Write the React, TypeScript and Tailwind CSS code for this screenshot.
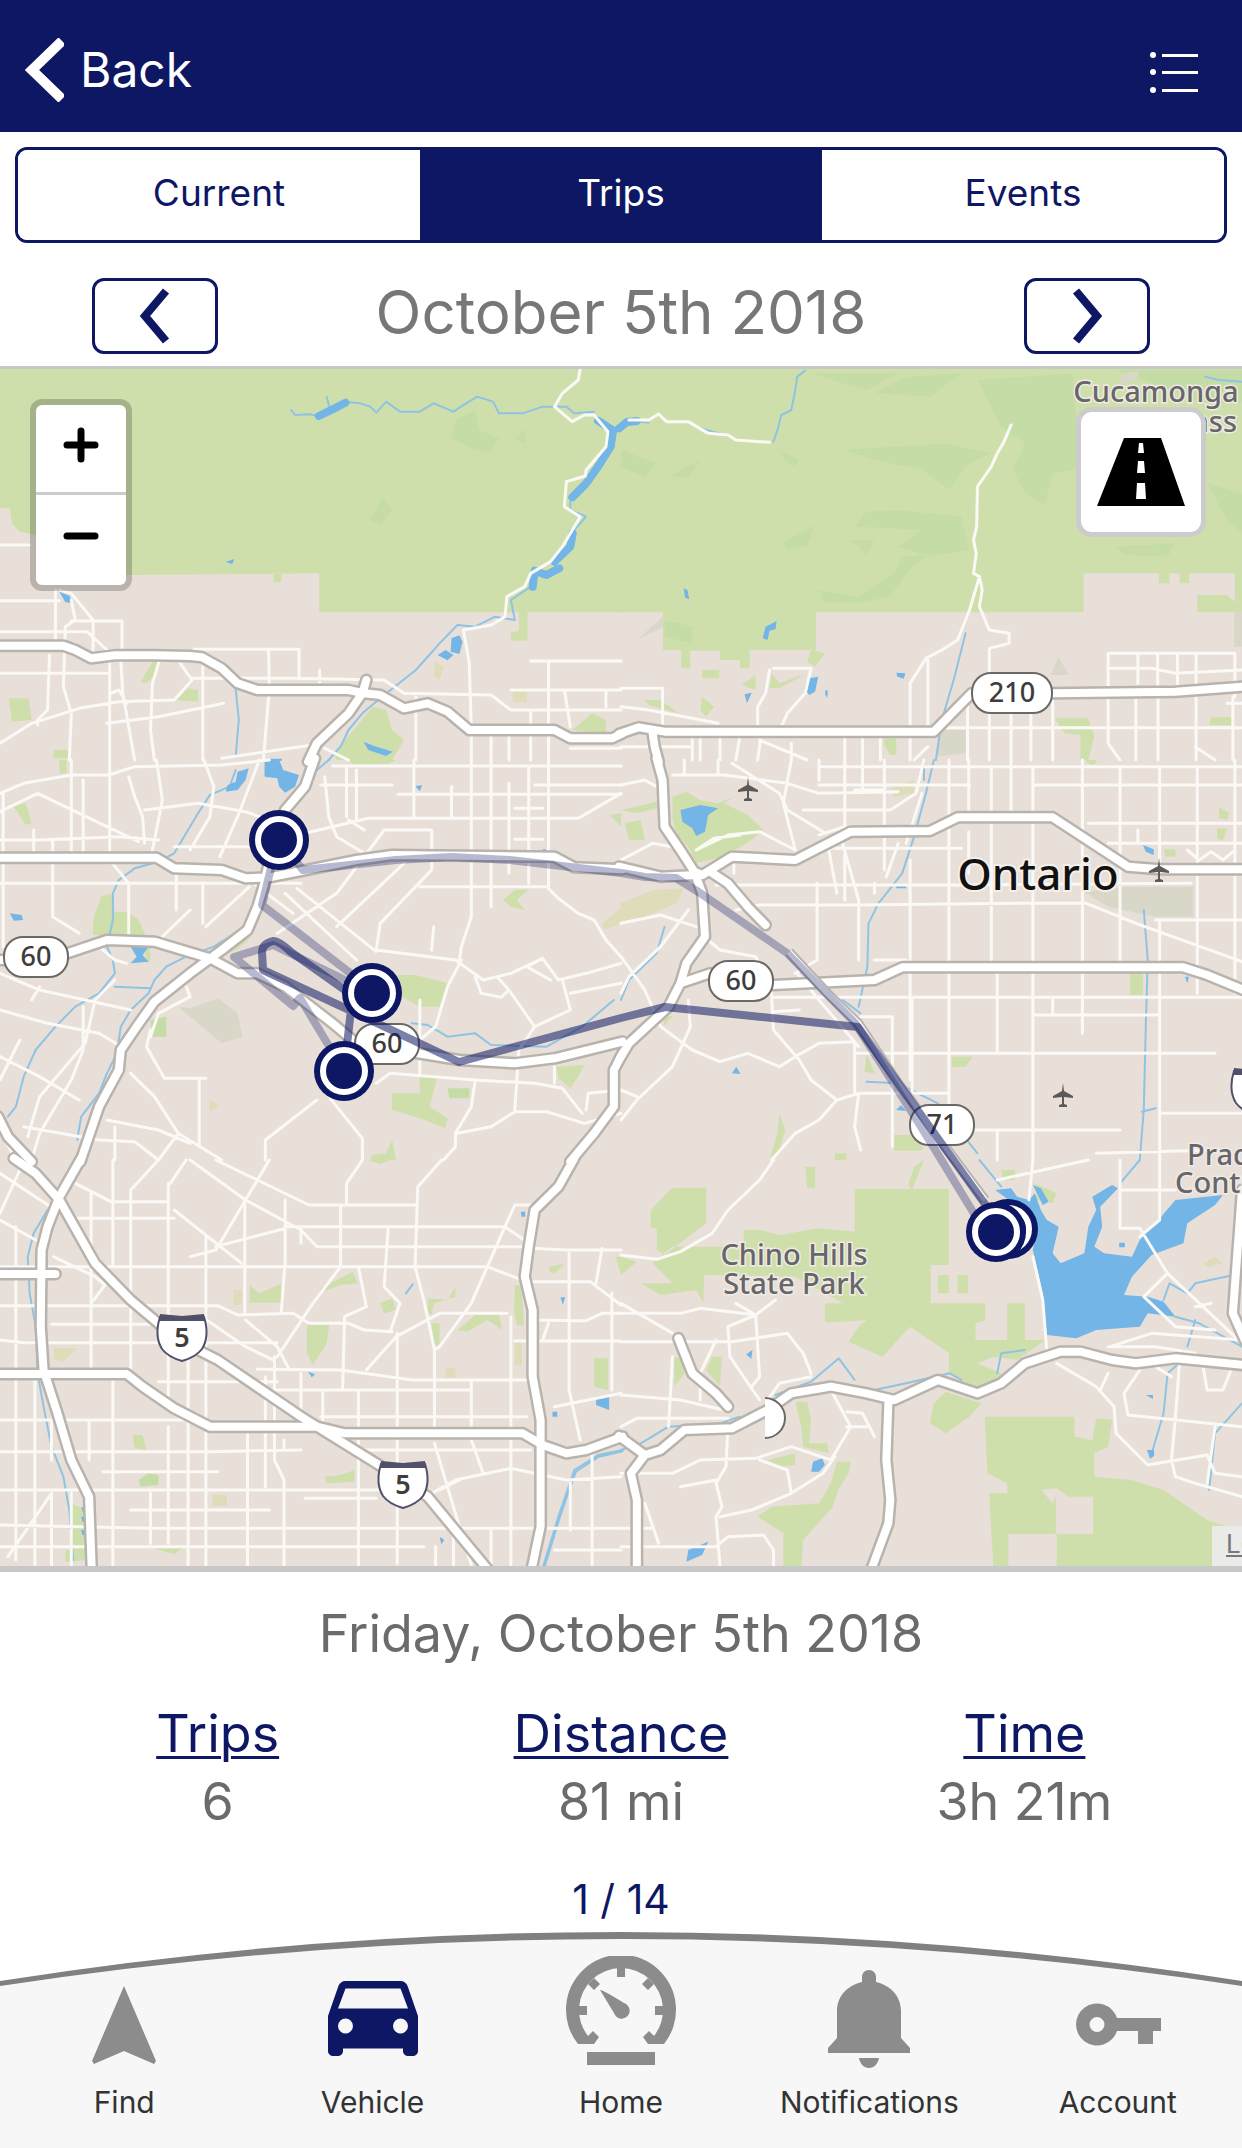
import { useState } from 'react'
import type { ReactNode } from 'react'
import clsx from 'clsx'

interface Tile {
  col: number
  row: number
  parks: string
  hills?: string
  pale?: string
  grey?: string
  lakes: string
  rivers?: string
  streams: string
  streets: string
  freeways: string
}

// Tile units are 1568 x 1200, each tile covers 621 x 400 of the map canvas
const tiles: Tile[] = [
  {
    col: 0,
    row: 0,
    parks:
      'M0 27H1570V757H806V640L330 645H90V525L50 515 30 490 25 445H0ZM1310 757H1332V842H1290V818L1310 812ZM355 965L385 905 400 905 395 940 370 970ZM445 1020L475 985 500 990V1025ZM22 1015H72L80 1080 30 1085ZM135 1170H175V1195H135ZM840 1180L900 1100 940 1040 975 1050 990 1110 1020 1140 990 1200H850ZM1445 1110L1495 1060 1530 1080V1120ZM690 640H710V667H690Z',
    hills: 'M1150 180L1200 150 1210 210 1260 235 1235 280 1190 265 1140 235ZM1300 235L1330 205 1325 250ZM965 410L990 450 960 495 935 480Z',
    pale: 'M1295 985H1330V1025H1295ZM1100 905L1120 920 1110 960 1095 945Z',
    lakes:
      'M1140 835L1160 826 1168 845 1160 882 1138 875ZM1105 885L1125 870 1145 885 1130 901ZM150 695L175 707 184 729 165 727ZM570 605L592 597 586 613ZM918 1145L945 1158 992 1175 975 1188 930 1170ZM680 1196H712V1202H680Z',
    rivers: 'M1510 182L1548 212 1542 260 1510 320 1480 370 1445 412M1446 520L1440 560 1400 605M1412 625L1380 645 1350 632 1345 680M805 168L850 142 872 128',
    streams:
      'M735 150L745 165 780 163 815 170M825 110L832 145M875 126L910 130 935 140 950 158 975 125 1010 155 1060 155 1095 130 1145 155 1180 128 1205 110 1245 125 1260 160 1320 160 1370 140 1430 140 1450 160 1500 155M1440 425L1440 450 1480 470 1450 510M1340 680L1290 720 1300 780 1250 770 1200 800 1155 795 1110 850 1050 930 970 1005 915 1060 880 1110 860 1160 830 1200M595 985L603 1080 595 1190M1548 212L1568 200',
    streets:
      'M1465 27L1460 60 1420 100 1400 140 1445 185 1475 165 1500 165 1535 215 1530 260 1480 330 1478 348 1430 365 1425 440 1465 470 1450 500 1420 560 1390 605 1340 640 1325 680 1280 710 1275 770 1240 795 1170 810 1185 910 1190 1110V1200M0 555H75M0 722H150M140 690V850M150 690L180 700 235 780M180 720L190 780 165 800 160 980 180 1060 175 1200M180 783H308V900M0 815H220L270 870M235 790V870M0 940H275M125 885L120 1050 95 1080V1095M0 1150L80 1090 200 1045 300 1025 440 1020 485 960 455 910M277 900V1200M305 900L310 1000 340 1200M405 890L385 970 380 1110 390 1200M512 900V1200M490 868H755V950M678 868L680 985 665 1200M485 955H740L970 960 1020 1000 1240 1005 1290 1050H1568M270 1090L400 1070 565 1030M560 1195L700 1170 790 1155M807 930V1000M1050 1010V1200M1385 905V1110M1340 903H1568M1290 990H1568M1425 990L1440 1100M1530 990V1040M1240 1120V1200M1340 1050V1200M1285 1120V1200M1440 1165H1568M1385 1110V1200M820 1165L880 1200M280 1000L300 990 320 1030',
    freeways:
      'M-5 857H160L190 870 230 895 290 886H390L480 888 510 892 560 925 600 970 650 990H880L920 1000 960 1005 1020 1045 1080 1030 1130 1055 1185 1110H1400L1440 1135H1545L1572 1120M925 960L915 1000 880 1060 800 1150 778 1205',
  },
  {
    col: 1,
    row: 0,
    parks:
      'M-2 27H1570V757H1455V705H1530L1550 725V640H1435V670H1410V640H1385V670H1358V640H1168V757H492V870H325V925H300V900H250V872H175V925H152V870H106V757H-2ZM205 930H248V955H205ZM205 1010L235 1040 215 1070 200 1050ZM60 1020L100 1020 145 1060 70 1035ZM480 868L515 880 490 920 470 905ZM305 975L340 945V990ZM380 940L400 970 470 940 400 985 375 985ZM1095 1075H1180L1195 1130 1180 1200H1160V1125L1120 1120ZM1490 1072H1540L1545 1095H1485ZM665 1135H695V1185H680L665 1155Z',
    hills:
      'M480 40L700 40 620 90 560 70ZM900 60L1140 40 1150 170 1150 330 1090 340 1070 435 1020 400 990 330 1020 250 960 200ZM640 100L720 50 860 40 780 110ZM560 270L820 250 930 280 870 320 830 390 760 330 640 300ZM590 500L620 455 700 450 860 470 880 570 780 590 700 560 760 510ZM500 690L600 710 690 640 710 590 780 580 720 640 680 710 590 730 510 725ZM0 270L90 310 60 350 0 320ZM1480 370L1568 400V520L1530 480ZM110 780L180 800V850L110 830ZM1250 30H1568V130H1480ZM580 540L640 540 620 585ZM1250 560L1400 550 1380 590 1270 585ZM120 350L200 300 170 350ZM410 545L490 495 470 560 420 570ZM400 270L450 300 440 320 415 300Z',
    grey: 'M800 1110H870V1180L800 1190ZM1085 945L1105 890 1130 945ZM1548 757H1568V860H1548ZM40 840L106 770V800ZM1255 60L1280 35 1310 35 1300 60 1265 72Z',
    lakes:
      'M158 685L168 690 172 718 162 713ZM365 800L393 783 390 808 375 812 370 840 358 835ZM475 955L498 950 490 995 475 1005 463 985ZM312 1003L330 998 318 1030ZM695 938L718 940 714 956 698 950ZM516 990L522 992 521 1014 516 1005Z',
    rivers: 'M-5 205L15 186 40 183',
    streams: 'M465 32L445 50 440 90 430 150 405 165 395 210 385 245M30 182L70 188M200 205L270 228M870 820L840 960 810 1080 795 1200M1475 50L1510 60 1568 65',
    streets:
      'M20 180H70L95 162 115 185 170 185 220 220 270 225 290 240 375 247M985 195L965 250 950 280 935 320 900 380 898 500 890 540 897 580 890 640 905 650 880 750 850 840 810 870 770 895 730 970V1200M905 650L912 690 905 740 930 810 980 820 980 850 930 865V950M0 985H105V1095M0 1040L70 1050 245 1090M385 925H480L465 1000 420 1060 405 1100M375 930L365 1000 345 1040V1110M0 1160H180M180 1130V1200M200 1130V1200M250 1130V1200M300 1130L290 1200M350 1140L470 1200M345 1200L352 1140M430 1150V1200M565 1120V1200M610 1120V1200M655 1120V1200M775 900V1110M800 1103H1568M775 1160L740 1200M875 1030V1200M930 1060V1200M985 1060V1200M1035 1060V1200M1090 1010V1200M1232 880H1550V1010M1305 880V970M1355 880V990M1405 880V980M1452 880V1200M1230 880V1150L1260 1200M1235 925H1340L1400 940 1568 930M1300 1000V1200M1356 1000V1200M1450 1160L1500 1200M1545 1010V1200M1530 1030H1568',
    freeways: 'M-5 1122L45 1102 110 1115H790L885 1000H1090L1400 995 1572 980M80 1120L85 1160 95 1205',
  },
  {
    col: 0,
    row: 1,
    parks:
      'M235 525V480L255 410 280 400 290 455H320L350 480 370 530ZM35 140L65 130 80 190 65 195ZM150 0H168V40H150ZM880 0H1000L980 12H890ZM1005 645H1050L1130 670 1110 740 1060 740 1015 710ZM1060 945H1105L1085 1040 1130 1075 1125 1105 1060 1075 1020 1060 990 1050V1000H1060ZM1270 420L1300 390 1335 388 1305 420 1325 450 1290 440ZM1405 920L1475 915 1460 950 1440 985 1410 955ZM935 1200L940 1185 975 1180 990 1140 1000 1200ZM1540 165L1568 160V200ZM560 575L635 530 600 568 562 588ZM360 545H378L380 600 372 612Z',
    hills: 'M380 780L420 770V830H385ZM1130 985H1185V1015H1135Z',
    pale: 'M1520 490L1568 445V490L1525 510ZM530 1020L555 1035 530 1055Z',
    grey: 'M450 740L480 745 550 715 600 760 612 830 560 850 510 800Z',
    lakes:
      'M668 0H705L715 30 755 45 745 80 720 98 705 80 700 55 668 50ZM600 35L628 25 620 60 600 90 570 95 575 75 595 65ZM330 560H375L360 585 375 605 330 610 345 590ZM25 460L55 465 58 480 35 482ZM1048 78L1066 76 1060 93ZM1370 268H1379V285H1370Z',
    streams:
      'M595 30L580 80 530 105 500 160 470 220 440 280 400 305 340 325 300 360 285 400 285 480 270 560 285 600 290 640 250 700 190 740 140 800 90 870 60 950 40 1040 20 1070M830 0L800 30M650 370L645 440 620 500 540 560 470 590 420 620 390 660 375 700 330 750 305 800 295 880 270 940 250 1000 205 1070 195 1140M290 680L380 685M1040 790L1080 795 1130 830 1200 820 1240 855 1380 860 1470 800 1550 720',
    streets:
      'M0 370H760M0 240H100L300 230 400 240M0 100L60 70 180 45 275 45 340 20 560 15 680 0M0 155L95 100 200 160 350 245M277 0V300L325 370V540M210 60V290M180 0V290M325 50L340 110 360 170 365 250M395 0L410 120 385 270M515 0L540 80 530 170 480 270M655 0L600 170 555 290M85 210V290M133 240V470L200 520M8 100V560M445 310V450M512 370V490M480 450L410 530M365 150L500 130 620 155 700 190M440 260H640M630 380L520 500M820 50L830 170 850 230 920 280M875 20V170M900 30V180M770 220L930 175H1460L1568 100M920 210L880 180M1045 0V175M1140 80V170M1190 0V470L1165 560 1160 600M810 75H990M1005 103H1568M840 18H1568M1240 0V440M1285 70V340M1335 20V370M1385 0V380M1300 145H1370M1300 238H1370M1568 75H1350M1060 380H1380L1410 415 1460 460 1500 480 1530 540 1568 590M1090 210V330L960 490 950 570 1150 600 1220 660 1290 640 1370 595 1410 660 1480 640 1568 610M1090 210H970L850 400 700 520M750 385L950 575M720 400L900 600M1020 310L850 500M640 370L740 460M1095 500L1090 570M1165 600L1130 680 1100 800 1060 840M1200 650L1215 700 1265 712 1285 690 1255 650M1285 690L1350 800 1310 870 1300 1050M1370 595L1330 620 1390 660M1420 660L1440 750 1350 800M1440 700L1568 670M985 940L1200 960 1350 970 1420 985 1470 1060M1480 1050L1485 1000 1568 990M985 940L950 970M800 1020L670 1140V1200M830 1010L915 1135V1200M1200 960L1190 1040 1150 1120V1160L1120 1200M1155 1120L1240 1100 1300 1055 1380 1055 1475 1090 1568 1060M1400 970V920M380 810L370 860 415 955H520M503 955V1160M330 940L390 1010 450 1120 560 1200M0 750L120 790 250 820 320 870M0 890L100 950 200 1020M50 840L0 960M290 660L240 720 215 850 100 1010 70 1130M210 740V870L180 960 100 1120 80 1200M0 640L100 690 330 750M80 720L100 680M470 680L480 710 400 760 380 830M290 1100V1200M60 1100L250 1140 340 1145 400 1200M270 1080L400 1110 480 1150M450 1120L400 1200M1060 720V945M250 560L290 600 320 610M0 1110L40 1200',
    freeways:
      'M-5 293H395L440 325 560 330 620 355 680 352 900 300 990 285 1400 290 1450 322 1572 328M795 -5L770 80 720 150 690 250 665 380 650 440 625 510 560 570 480 640 390 725 345 800 305 870 300 930 250 1040 203 1205M170 580L270 540 390 545 530 595 600 640 650 640 720 680 840 790 900 850 1160 900 1300 910 1400 895 1572 845M-5 600H20M1572 880L1550 930V1040L1500 1120 1440 1205M-5 1070L20 1130 80 1205',
  },
  {
    col: 1,
    row: 1,
    parks:
      'M130 110L165 95 200 120 245 130 290 108 260 130 320 165 360 210 330 240 260 290 190 310 170 260 140 220 130 180ZM0 150L90 125 105 140 40 160ZM1285 640H1318V705H1285ZM835 890H888L870 920 835 922ZM690 1125H730L765 1165 755 1172H690ZM400 1060L415 1110 400 1170 375 1200 395 1120ZM1510 140L1535 160 1530 180 1510 175ZM1505 205H1530L1520 243 1505 235ZM1370 268H1400V290H1375ZM620 880L640 940 615 935ZM1170 0H1200V10L1185 15ZM110 770L132 768 108 798ZM540 1180H570V1200H540ZM10 190L50 180 60 240 20 240Z',
    pale: 'M0 430L80 390 160 385 140 430 60 470 0 485ZM680 85L740 60V100L690 110Z',
    grey: 'M1170 395L1280 380H1445V470H1350L1230 440Z',
    lakes:
      'M150 150L200 135 245 145 220 165 212 215 190 228 180 205 155 185ZM280 940L291 920 302 942ZM695 1050L707 1035 720 1053ZM1318 255L1345 268V285L1325 275ZM1424 650H1434L1430 670ZM695 375H720V385H695Z',
    streams:
      'M790 0L770 100 740 230 710 340 650 430 625 490 622 620 600 740M765 0V60M110 500L90 580 20 660 0 720M1320 450L1330 600 1325 800 1320 1050 1310 1200M1315 1055L1350 1045M620 965L700 970 800 1030 900 1180M560 720L605 760',
    streets:
      'M130 45H260L420 70 500 100 700 95M0 75L60 60 90 80M160 0V45M245 0V45M280 10L400 100 420 150 510 215M430 0L410 130 440 270M500 0V60M565 0V200L500 225M610 0V90M665 0V330M590 90H660M765 0L745 100 680 150 460 150M500 20H1568M828 0V1130M878 0V170M878 215V340M935 20V620M985 0V160M500 75H880M1040 75H1568M500 265H860M520 240L545 400M1180 190H1568M1230 250H1568M240 375H850L1440 370M290 450L350 435H590L1000 430 1175 430 1300 490 1568 605M1350 480H1568M640 600H720M385 712H1568M1040 765H1360M590 880H1500M600 1000H828M890 1110H1260M1360 1060H1568M730 300V960M950 640V880M1040 20V1200M1165 0V820M1260 20V620M1360 20V310M1360 480V1200M1455 20V700M1550 0V700M1305 210V250M550 210L600 420V600M565 280V420M640 370V400M495 370V600L440 640M285 290V340M0 300L80 250 150 265M190 270L270 225 350 215 440 270M190 270L235 235 300 225M0 490L100 465 190 500M170 450L100 560 20 650 0 700M0 590L60 690 100 800 180 870 250 905 320 880 400 920 440 890 500 850 590 845M220 540L250 570 340 590 380 700 385 810 450 900 480 960 545 1020 500 1080 440 1120 380 1200M545 1020L600 1000 590 1100 605 1170M385 755L450 750M170 720L175 800 130 920 40 1020 0 1080M0 990L40 1010M590 850V1000M605 770H685V1160M700 250L670 350M720 250L760 100M445 640L500 720 600 860M950 1110V1200M1200 1180L1500 1170M735 720V1000M1090 720V765M1430 270L1460 300 1490 275 1520 300 1545 275',
    freeways:
      'M90 -5L105 60 110 200 150 270 185 335 205 400 212 530 165 610 150 670 120 740 20 850 -3 895M-5 320L100 350 190 345M185 335L205 345 280 290 440 300 580 215 780 213 850 172H1090L1280 320 1360 328H1572M225 335L270 370 320 440 365 495M150 670L225 640M385 675L640 660 710 622H1420L1480 645 1572 690',
  },
  {
    col: 0,
    row: 2,
    parks:
      'M630 375L655 400 710 372V428H630ZM810 385L890 335 905 370 860 375 815 395ZM775 490H832L825 550 790 615 775 580ZM960 430L990 415 1000 450 970 460ZM1080 415L1130 420 1150 380V410L1095 430 1090 465 1080 455ZM1090 490H1110V555H1095ZM1155 510L1200 465H1260L1268 510 1230 480 1180 515ZM1300 375H1318L1322 495H1305L1298 450ZM1385 320L1425 312 1400 340 1388 335ZM1500 595H1535V690L1500 680ZM335 825H360L370 870 340 865ZM820 950L860 945 895 930V965L825 970ZM180 1030L215 1050 220 1200 165 1205V1170H180ZM385 1165H460L440 1182ZM930 0H985L960 12ZM1555 290H1568V345Z',
    hills: 'M350 960L375 940 400 945V975L355 980Z',
    pale: 'M590 390H610V435H590ZM135 565H195L160 605 138 600ZM1300 545H1318V615H1300ZM1125 625H1150V652H1125ZM535 1005H573V1038H538Z',
    lakes:
      'M1505 710H1538V750L1505 735ZM778 635L796 643 787 652ZM1110 1130L1122 1140 1114 1153ZM1315 155H1326V170H1317ZM1415 412H1427L1421 434ZM1395 755H1407V770H1395ZM205 1040L215 1045 210 1060ZM205 1070H215V1085H208ZM205 1110H215V1125H208Z',
    streams:
      'M120 150L85 220 70 290 75 400 90 500 95 640 110 740 130 860 160 950 175 1050 185 1200M1042 373L1025 400M1572 870L1510 885 1450 930 1430 1000 1410 1070 1370 1225M1572 874L1512 890 1454 935 1434 1000 1414 1070 1374 1225',
    streets:
      'M40 200V1200M88 660V1215M130 780V900M130 1000V1215M180 1000V1215M230 100V640M225 780V900M285 0V320M285 650V1215M330 90V660M425 70V730M425 800V1150M520 230V1215M475 540V1215M618 120V460M625 790V1215M720 120V300L710 460M717 840V870M693 590V900L717 960V1215M860 140V320L790 430 700 590M905 690V1215M815 690V780M760 640V780M1003 520V800M1003 820V1210M1097 570V800M1097 850L1160 1100 1190 1215M1190 660V840L1220 940M1290 470V800M1290 830V1215M1437 280V690L1465 840M1520 265L1505 370M0 320H640L1230 320 1330 365H1490L1568 435M0 437H550L600 465 740 460 780 490 880 490 920 510 990 515M180 175H440M280 125H420M130 493H400M0 540L60 548H700M400 665H700M695 690H1190M650 628L860 630 1040 660H1330M0 780H470M810 770H1330M0 875H530L760 870M870 870H1340M0 990H960M330 1050H680M260 935H550M0 1095L380 1105H1568M0 1160H1070M770 1015H950M1090 1000L1150 960 1290 925 1430 960 1568 950M720 200H1270M800 260H1330M1340 265L1430 270H1568M1350 135H1300L1275 200 1330 245M1340 480L1480 482 1520 460 1568 460M1300 543H1568M1385 490L1370 540M1400 740L1568 700M1400 1170H1568M1495 880V1215M1440 960V1110M1545 400V690M780 135H1050M545 0L780 135M480 0L620 120 760 210 800 260M400 0L330 90M470 0L430 70M680 0L545 270 480 290M545 260L720 205M440 150L610 310M915 0L875 70V135M1115 0L1055 80 1048 320 1070 420 1097 570 1110 560 1190 430 1275 200M980 205L970 380 1010 430 985 515M905 320L925 440 870 470 865 690M925 630L1000 530 1110 460H1280M510 470L620 560 690 600M620 480L700 560 730 628M0 40L140 150M50 30L0 160M0 180L90 240M135 290L240 350 265 375 230 430M190 70L280 125M130 1000L20 1190M380 1000V1150M1100 1160V1215M1145 1100V1215M1240 1110V1215M670 650V980M1160 960L1110 990M760 205V250',
    freeways:
      'M205 -5L150 110 120 200 105 270 103 500 110 630 145 760 180 900 225 1010 232 1240M35 -5L90 40 150 120 240 310 330 420 450 540 550 600 760 770 950 910 1080 1010 1240 1240M-5 342H140M-5 642H320L360 680 440 745 530 800H800L870 820H1320L1370 855 1430 880 1480 870 1572 830M1450 -5L1410 80 1350 150 1335 260 1325 350 1345 450V650L1365 780 1365 1100 1340 1240',
  },
  {
    col: 1,
    row: 2,
    parks:
      'M590 87H828V315H782V430H920V480L895 490V540H975V430H1020V540H1072L1000 600 940 590 900 610 960 640 960 670 900 690 828 640V580L730 500 660 590 575 545 600 500 620 480 560 485 515 487V430H560L440 350 210 345 208 430 190 390 100 405 50 370 130 370 80 310 90 298 130 260H250L310 255V210H350L400 225 500 205 590 215ZM800 345H828V400H800ZM850 345H876V400H850ZM0 345L0 290 40 305ZM75 150L130 83H215V190L110 285 90 270V205H75ZM465 20H490V85H470ZM740 20L765 0 735 90 725 75ZM135 590V680L160 640 165 600ZM230 590L255 590 250 680 215 630ZM1045 70L1100 100 1090 130 1050 120ZM960 30H995V60H965ZM780 790L790 730 820 695 910 730 880 770 820 820ZM440 725H470L480 780 475 850 520 850 525 880 460 860 455 800ZM370 900L440 880V915L400 920ZM545 905L580 905 575 940 550 985 535 1040 460 1140 455 1218H410V1120L345 1070 380 1040 500 1030 530 970ZM918 770H1145V830L1190 840 1200 775 1240 780 1230 860 1195 880V950L1290 960 1370 990 1480 1080 1530 1100V1225H1100V1122H978V1225H940L930 1000 975 1000V970L925 940ZM1098 1010H1192V1122H1098ZM1060 990L1100 985 1130 1010H1098L1090 1030Z',
    pale: 'M1470 310L1500 290 1520 310 1480 322Z',
    lakes:
      'M945 90L985 85 1000 110 1030 120 1045 100 1060 150 1075 180 1105 200 1090 280 1110 310 1170 280 1180 200 1200 150 1190 110 1240 75 1255 85 1210 140 1215 200 1195 260 1220 280 1290 290 1310 240 1350 190 1400 120 1520 105 1500 135 1430 190 1420 250 1340 285 1290 350 1270 405 1330 410 1370 425 1400 470 1330 460 1310 500 1200 510 1150 535 1075 525 1065 400 1040 270 1050 200 990 130ZM1040 75L1060 85 1080 125 1065 135ZM485 905L508 895 515 915 500 935H480ZM170 1170L220 1145 205 1185 165 1205ZM316 583L332 570 329 597ZM1328 870H1346V888L1336 896ZM1325 705H1343V717ZM1258 248H1272V262H1258Z',
    streams:
      'M1310 0L1260 70M905 0L960 80M0 870L50 850 120 800 250 790 300 770M390 705L480 665 550 595 590 660M640 690L720 670 830 640 860 660M950 640L960 580 1020 570M1410 610L1380 640 1370 760 1340 880M1500 820L1485 990M1500 820L1568 730M1370 420L1385 370 1430 400 1450 370 1568 340M1400 470L1460 490 1568 560M1450 480L1430 560',
    streets:
      'M385 0L350 60 270 150 230 220 150 275 90 298 0 285M0 460H150L200 445 340 465 390 420M290 430L340 465 350 650 330 680M0 430L145 530M0 545H280L420 520 460 580 480 640M340 465L270 500 275 590 350 720M130 590L120 800M240 540L200 640V720M0 705L150 720 260 750M0 800L40 775H270M270 800L265 920 240 970 255 1040 240 1070 250 1218M0 940H130L200 900 340 895 430 860 530 900 580 800 530 690M350 900L420 930 430 1000 330 1050 250 1070M150 980L240 960M430 1000L510 940 540 890M0 1105H80M0 1160H240L270 1130 360 1125 385 1170V1218M60 1030L95 1150M570 755L610 760 640 830M570 800H620M1040 0L1030 120M1040 290L1065 420 1075 570M1260 0V205H1310L1380 340 1568 550M1360 0V180L1310 230M1260 90H1400M1380 340L1320 410 1400 500 1500 510M1450 440L1490 430M950 60L1180 0M1100 610L1200 680 1245 740 1250 820 1330 915 1480 885 1500 940 1568 950M1230 640L1210 690M1310 630L1270 700 1280 765 1568 800M1410 610L1400 770 1390 900 1400 950 1450 970 1568 1010M1235 560L1340 520 1568 540M1230 560L1350 560 1450 580M1470 620L1480 690 1520 690 1540 630M1500 800L1480 970M1350 620L1390 650M370 720L400 670 480 650',
    freeways:
      'M145 535L180 640 240 700 270 740M-5 828L60 885 100 870 160 810 280 805 370 750 430 700 530 680 620 700 690 720 800 660 900 700 960 670 1020 610 1110 575 1160 575 1240 600 1300 610 1400 595 1572 615M60 885L25 940 40 1020V1240M675 730L670 900 680 1020 675 1090 630 1235M1568 90L1545 460 1575 540',
  },
]

const layers: { key: keyof Tile; className: string }[] = [
  { key: 'parks', className: 'fill-[#cfdfac]' },
  { key: 'hills', className: 'fill-[#c5dca7]' },
  { key: 'pale', className: 'fill-[#dedcb9]' },
  { key: 'grey', className: 'fill-[#d8d7c8]' },
  { key: 'streams', className: 'fill-none stroke-[#8fc3e3] stroke-2' },
  { key: 'rivers', className: 'fill-none stroke-[#73b5e6] stroke-[8px]' },
  { key: 'lakes', className: 'fill-[#73b5e6]' },
  { key: 'streets', className: 'fill-none stroke-[#fbf9f6] stroke-3' },
  { key: 'freeways', className: 'fill-none stroke-[#b9b3ad] stroke-[13px]' },
  { key: 'freeways', className: 'fill-none stroke-white stroke-[8px]' },
]

const routeShields = [
  { label: '60', x: 36, y: 957, width: 64 },
  { label: '60', x: 387, y: 1044, width: 64 },
  { label: '60', x: 741, y: 981, width: 64 },
  { label: '71', x: 942, y: 1125, width: 64 },
  { label: '210', x: 1012, y: 693, width: 80 },
]

const interstateShields = [
  { label: '5', x: 182, y: 1338 },
  { label: '5', x: 403, y: 1485 },
  { label: '15', x: 1256, y: 1092 },
]

const airports = [
  { x: 748, y: 789 },
  { x: 1159, y: 870 },
  { x: 1063, y: 1095 },
]

const stops = [
  { x: 279, y: 840 },
  { x: 372, y: 993 },
  { x: 344, y: 1071 },
  { x: 1008, y: 1229 },
  { x: 996, y: 1232 },
]

const faintTrips = [
  'M279 840L271 868 262 905 372 990',
  'M281 842L303 870 341 866 396 860 451 857 510 860 570 867 621 873 645 877 676 878 700 893 787 953 855 1023 920 1125 984 1230',
  'M372 993L273 945 234 957 293 1006 300 998 344 1071',
]

const boldTrips = [
  'M344 1071L351 1010 349 993 291 952Q278 940 273 941 262 944 262 952L263 970 345 1008 459 1062 621 1018 665 1007 858 1027 1000 1225',
]

function RouteShield({ label, x, y, width }: { label: string; x: number; y: number; width: number }) {
  return (
    <g>
      <rect x={x - width / 2} y={y - 20} width={width} height="40" rx="19" className="fill-white stroke-[#6b6966] stroke-2" />
      <text x={x} y={y + 9} textAnchor="middle" className="fill-[#3d3d3d] text-[27px] font-medium">
        {label}
      </text>
    </g>
  )
}

function InterstateShield({ label, x, y }: { label: string; x: number; y: number }) {
  return (
    <g>
      <path
        d={`M${x - 22} ${y - 21}H${x + 22}Q${x + 28} ${y - 2} ${x + 20} ${y + 11}Q${x + 14} ${y + 19} ${x} ${y + 23}Q${x - 14} ${y + 19} ${x - 20} ${y + 11}Q${x - 28} ${y - 2} ${x - 22} ${y - 21}Z`}
        className="fill-white stroke-[#50506b] stroke-2"
      />
      <path d={`M${x - 22} ${y - 24}L${x} ${y - 22}L${x + 22} ${y - 24}L${x + 23} ${y - 17}H${x - 23}Z`} className="fill-[#50506b]" />
      <text x={x} y={y + 9} textAnchor="middle" className="fill-[#3d3d3d] text-[27px] font-semibold">
        {label}
      </text>
    </g>
  )
}

function TripMap() {
  return (
    <svg
      viewBox="0 369 1242 1197"
      preserveAspectRatio="xMidYMid slice"
      className="absolute inset-0 h-full w-full font-['Noto_Sans',sans-serif]"
      role="img"
      aria-label="Map of trips around Ontario"
    >
      {layers.map((layer, i) =>
        tiles.map((tile) => (
          <path
            key={`${i}-${tile.col}-${tile.row}`}
            d={tile[layer.key] as string | undefined}
            transform={`translate(${tile.col * 621} ${360 + tile.row * 400}) scale(${621 / 1568} ${400 / 1200})`}
            vectorEffect="non-scaling-stroke"
            fillRule="evenodd"
            strokeLinejoin="round"
            strokeLinecap="round"
            className={layer.className}
          />
        ))
      )}

      {/* CA-71 */}
      <path d="M789 952L827 993 858 1023 898 1083 938 1137 985 1200" className="fill-none stroke-[#b9b3ad] stroke-[10px]" />
      <path d="M789 952L827 993 858 1023 898 1083 938 1137 985 1200" className="fill-none stroke-white stroke-[6px]" />

      <path d="M765 1398A20 20 0 0 1 765 1438" className="fill-white stroke-[#6b6966] stroke-2" />
      {routeShields.map((s) => (
        <RouteShield key={`${s.label}-${s.x}`} {...s} />
      ))}
      {interstateShields.map((s) => (
        <InterstateShield key={s.x} {...s} />
      ))}
      {airports.map((a) => (
        <path
          key={a.x}
          transform={`translate(${a.x} ${a.y})`}
          d="M0 -12L1 -4 10 1V3L1 2V9L4 10V12H-4V10L-1 9V2L-10 3V1L-1 -4Z"
          className="fill-[#5c5a58]"
        />
      ))}

      <g className="fill-[#66666b] stroke-[#f1ebe4] stroke-3 text-[29px] font-medium [paint-order:stroke]">
        <text x="1156" y="402" textAnchor="middle">Cucamonga</text>
        <text x="1237" y="432" textAnchor="end">Pass</text>
        <text x="794" y="1265" textAnchor="middle">Chino Hills</text>
        <text x="794" y="1294" textAnchor="middle">State Park</text>
        <text x="1187" y="1165">Prado</text>
        <text x="1175" y="1193">Control</text>
      </g>
      <text x="1038" y="890" textAnchor="middle" className="fill-[#111] stroke-[#f4efe9] stroke-4 text-[44px] font-medium [paint-order:stroke]">
        Ontario
      </text>

      {faintTrips.map((d) => (
        <path key={d} d={d} strokeLinejoin="round" className="fill-none stroke-[#0d1763]/30 stroke-[8px]" />
      ))}
      {boldTrips.map((d) => (
        <path key={d} d={d} strokeLinejoin="round" className="fill-none stroke-[#0d1763]/55 stroke-[8px]" />
      ))}
      {stops.map((s) => (
        <g key={s.x} className="fill-[#0d1763]">
          <circle cx={s.x} cy={s.y} r="30" />
          <circle cx={s.x} cy={s.y} r="21" className="stroke-white stroke-[6px]" />
        </g>
      ))}
    </svg>
  )
}

const icons: Record<string, ReactNode> = {
  Find: <path d="M60 30L92 105 90 108 60 95 30 108 28 105Z" />,
  Vehicle: (
    <path
      fillRule="evenodd"
      d="M94.600 30.050C93.600 27.100 90.750 25 87.500 25H32.500C29.200 25 26.450 27.100 25.400 30.050L15 60V95C15 97.750 17.250 100 20 100H25C27.750 100 30 97.750 30 95V92.500H90V95C90 97.750 92.250 100 95 100H100C102.750 100 105 97.750 105 95V60ZM32.500 77.500A7.500 7.500 0 1 1 32.500 62.500 7.500 7.500 0 0 1 32.500 77.500ZM87.500 77.500A7.500 7.500 0 1 1 87.500 62.500 7.500 7.500 0 0 1 87.500 77.500ZM25 52.500L32.500 32.500H87.500L95 52.500Z"
    />
  ),
  Home: (
    <>
      <path d="M17 88A55 55 0 1 1 103 88H87L82 81 88 75 93 80A42 42 0 1 0 27 80L32 75 38 81 33 88Z" />
      <path d="M56 10H64V21H56ZM17 50H26V59H17ZM94 50H103V59H94ZM27 28L33 22 39 28 33 34ZM93 28L87 22 81 28 87 34Z" />
      <path d="M39 34Q42 34 63 47A8 8 0 1 1 53 57Z" />
      <path d="M26 96H94V109H26Z" />
    </>
  ),
  Notifications: (
    <path d="M60 14C64 14 67 17 67 21V26C83 30 92 41 92 55V82L101 92V97H19V92L28 82V55C28 41 37 30 53 26V21C53 17 56 14 60 14ZM50 102H70C69 108 65 112 60 112S51 108 50 102Z" />
  ),
  Account: (
    <path fillRule="evenodd" d="M59 62H103V75H95V88H80V75H59A21 21 0 1 1 59 62ZM39 61A7 7 0 1 0 39 76 7 7 0 0 0 39 61Z" />
  ),
}

const tabs = ['Find', 'Vehicle', 'Home', 'Notifications', 'Account']
const views = ['Current', 'Trips', 'Events']

const stats = [
  { label: 'Trips', value: '6' },
  { label: 'Distance', value: '81 mi' },
  { label: 'Time', value: '3h 21m' },
]

function DayButton({ label, d }: { label: string; d: string }) {
  return (
    <button
      type="button"
      aria-label={label}
      className="flex h-[76px] w-[126px] items-center justify-center rounded-xl border-3 border-[#0d1763] text-[#0d1763]"
    >
      <svg viewBox="0 0 36 56" className="h-14 w-9" fill="none" stroke="currentColor" strokeWidth="8">
        <path d={d} />
      </svg>
    </button>
  )
}

export default function App() {
  const [view, setView] = useState('Trips')
  const [tab, setTab] = useState('Vehicle')

  return (
    <div className="flex min-h-screen flex-col bg-white font-['Inter',sans-serif]">
      <header className="flex h-[132px] items-center justify-between bg-[#0d1763] px-6 pt-2 text-white">
        <button type="button" className="flex items-center gap-4 text-5xl">
          <svg viewBox="0 0 40 64" className="h-16 w-10" fill="none" stroke="currentColor" strokeWidth="10">
            <path d="M38 3L8 32 38 61" />
          </svg>
          Back
        </button>
        <button type="button" aria-label="Menu" className="mr-5 pt-1">
          <svg viewBox="0 0 48 42" className="h-[42px] w-12" fill="currentColor">
            <path d="M12 3H48V6H12ZM12 20H48V23H12ZM12 38H48V41H12Z" />
            <circle cx="3" cy="4" r="3" />
            <circle cx="3" cy="21" r="3" />
            <circle cx="3" cy="39" r="3" />
          </svg>
        </button>
      </header>

      <div className="mx-[15px] mt-[15px] grid grid-cols-3 overflow-hidden rounded-xl border-3 border-[#0d1763]">
        {views.map((v) => (
          <button
            key={v}
            type="button"
            aria-pressed={v === view}
            onClick={() => setView(v)}
            className={clsx('h-[90px] pb-1 text-[37px]', v === view ? 'bg-[#0d1763] text-white' : 'bg-white text-[#0d1763]')}
          >
            {v}
          </button>
        ))}
      </div>

      <div className="mt-[35px] mb-3 grid grid-cols-4 items-start justify-items-center">
        <DayButton label="Previous day" d="M29 3L8 28 29 53" />
        <h1 className="col-span-2 text-6xl leading-[68px] text-[#777]">October 5th 2018</h1>
        <DayButton label="Next day" d="M7 3L28 28 7 53" />
      </div>

      <section className="relative min-h-96 flex-1 overflow-hidden border-t-3 border-b-6 border-[#c8c8c8] bg-[#e8dfd9]">
        <TripMap />

        <div className="absolute top-[30px] left-[30px] flex w-[102px] flex-col overflow-hidden rounded-xl border-6 border-black/20 bg-white bg-clip-padding">
          <button type="button" aria-label="Zoom in" className="flex h-[90px] items-center justify-center border-b-3 border-[#ccc] pb-2">
            <svg viewBox="0 0 36 36" className="size-9" stroke="currentColor" strokeWidth="7" strokeLinecap="round">
              <path d="M4 18H32M18 4V32" />
            </svg>
          </button>
          <button type="button" aria-label="Zoom out" className="flex h-[90px] items-center justify-center pb-2">
            <svg viewBox="0 0 36 36" className="size-9" stroke="currentColor" strokeWidth="7" strokeLinecap="round">
              <path d="M4 18H32" />
            </svg>
          </button>
        </div>

        <button
          type="button"
          aria-label="Map style"
          className="absolute top-[38px] right-9 flex size-[130px] items-center justify-center rounded-2xl border-5 border-[#ccc] bg-white"
        >
          <svg viewBox="0 0 88 68" className="h-[68px] w-[88px]">
            <path
              fillRule="evenodd"
              d="M27 0H64L88 68H0ZM42 5L41 15H47L46 5ZM41 23L40 35H48L47 23ZM40 45L39 61H49L48 45Z"
            />
          </svg>
        </button>

        <div className="absolute right-0 bottom-0 h-10 w-[30px] overflow-hidden bg-[#ececec]/90 pl-3.5 text-[26px] leading-9">
          <a href="#leaflet" className="text-[#777] underline">
            Leaflet
          </a>
        </div>
      </section>

      <section className="px-4 pt-7 pb-2 text-center">
        <h2 className="text-[52px] leading-[68px] text-[#6b6b6b]">Friday, October 5th 2018</h2>
        <dl className="mt-8 grid grid-cols-3 text-[52px] leading-[68px]">
          {stats.map((s) => (
            <div key={s.label}>
              <dt>
                <a href={`#${s.label.toLowerCase()}`} className="text-[#0d1763] underline decoration-3 underline-offset-4">
                  {s.label}
                </a>
              </dt>
              <dd className="text-[#6b6b6b]">{s.value}</dd>
            </div>
          ))}
        </dl>
        <p className="mt-[38px] text-[41px] leading-[50px] text-[#0d1763]">1 / 14</p>
      </section>

      <footer className="relative">
        <svg
          viewBox="0 0 1242 216"
          preserveAspectRatio="none"
          className="absolute inset-0 h-full w-full"
          aria-hidden="true"
        >
          <path d="M0 49Q621 -49 1242 49V216H0Z" fill="#808080" />
          <path d="M0 54Q621 -40 1242 54V216H0Z" fill="#f7f7f7" />
        </svg>
        <nav className="relative grid grid-cols-5 pt-6 pb-7">
          {tabs.map((t) => (
            <button
              key={t}
              type="button"
              aria-current={t === tab ? 'page' : undefined}
              onClick={() => setTab(t)}
              className="flex flex-col items-center gap-2 text-[30px] leading-9 text-[#333]"
            >
              <svg
                viewBox="0 0 120 120"
                fill="currentColor"
                className={clsx('size-[120px]', t === tab ? 'text-[#0d1763]' : 'text-[#8c8c8c]')}
              >
                {icons[t]}
              </svg>
              {t}
            </button>
          ))}
        </nav>
      </footer>
    </div>
  )
}
